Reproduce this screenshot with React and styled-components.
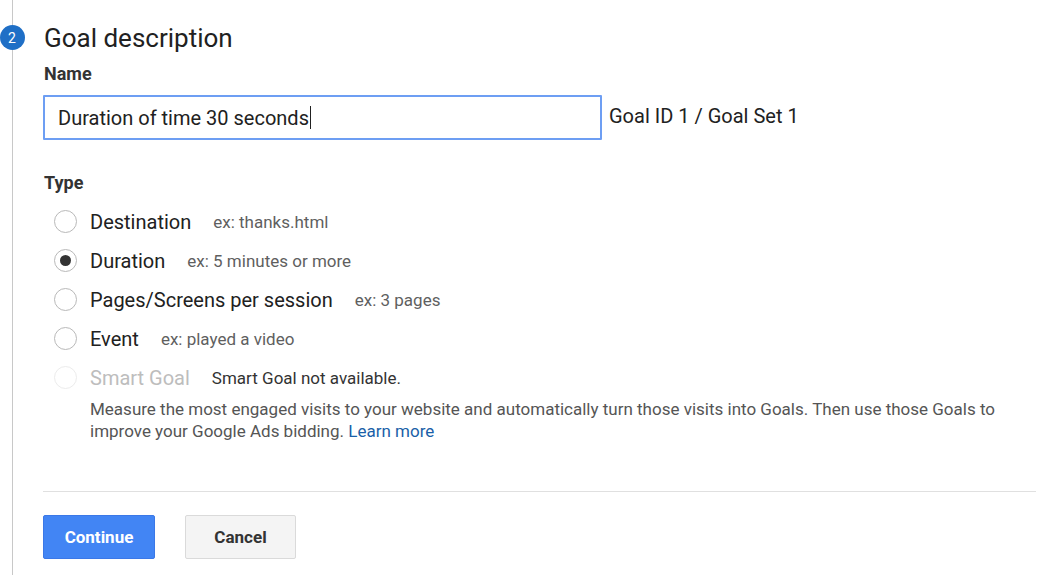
import React from 'react';
import styled, { createGlobalStyle } from 'styled-components';

const GlobalStyle = createGlobalStyle`
  html, body {
    margin: 0;
    padding: 0;
    background: #fff;
    font-family: Roboto, "Liberation Sans", Arial, sans-serif;
    color: #212121;
  }
`

const Page = styled.div`
  display: flex;
  width: 1038px;
  height: 575px;
  overflow: hidden;
`

const Rail = styled.div`
  width: 24px;
  display: flex;
  flex-direction: column;
  align-items: center;
  flex-shrink: 0;
`

const RailLine = styled.div`
  width: 1px;
  background: #c8c8c8;
  height: ${p => p.$h ? p.$h + 'px' : 'auto'};
  flex: ${p => p.$h ? '0 0 auto' : '1'};
`

const StepBadge = styled.div`
  width: 25px;
  height: 25px;
  border-radius: 50%;
  background: #1f6fc6;
  color: #fff;
  font-size: 14px;
  display: flex;
  align-items: center;
  justify-content: center;
  flex-shrink: 0;
`

const Content = styled.div`
  flex: 1;
  margin-left: 19px;
  margin-right: 2px;
  padding-top: 22px;
  display: flex;
  flex-direction: column;
`

const Title = styled.h1`
  margin: 0 0 8px 1px;
  font-size: 26px;
  line-height: 32px;
  font-weight: 400;
  color: #212121;
`

const Label = styled.div`
  font-size: 18px;
  line-height: 24px;
  font-weight: 700;
  color: #333;
  margin-left: 1px;
  margin-top: ${p => p.$top || 0}px;
`

const NameRow = styled.div`
  display: flex;
  align-items: center;
  margin-top: 9px;
`

const TextBox = styled.div`
  box-sizing: border-box;
  width: 559px;
  height: 45px;
  border: 2px solid #6d9ef3;
  border-radius: 1px;
  padding: 0 13px;
  display: flex;
  align-items: center;
  font-size: 20px;
  color: #212121;
`

const Caret = styled.span`
  display: inline-block;
  width: 1px;
  height: 23px;
  background: #212121;
  margin-left: 1px;
`

const GoalId = styled.span`
  margin-left: 7px;
  font-size: 20px;
  color: #212121;
  margin-top: -3px;
`

const RadioList = styled.div`
  display: flex;
  flex-direction: column;
  margin-top: 7px;
  padding-left: 11px;
`

const RadioRow = styled.div`
  display: flex;
  align-items: center;
  height: 39px;
`

const RadioCircle = styled.span`
  box-sizing: border-box;
  width: 23px;
  height: 23px;
  border-radius: 50%;
  border: 1.5px solid ${p => p.$disabled ? '#ececec' : '#b9b9b9'};
  display: flex;
  align-items: center;
  justify-content: center;
  flex-shrink: 0;

  &::after {
    content: '';
    width: 11px;
    height: 11px;
    border-radius: 50%;
    background: #333;
    display: ${p => p.$checked ? 'block' : 'none'};
  }
`

const RadioLabel = styled.span`
  margin-left: 13px;
  font-size: 20px;
  color: ${p => p.$disabled ? '#bdbdbd' : '#212121'};
`

const Example = styled.span`
  margin-left: 22px;
  font-size: 17px;
  color: ${p => p.$dark ? '#333' : '#5f5f5f'};
`

const Help = styled.p`
  margin: 1px 0 0 47px;
  width: 940px;
  font-size: 17px;
  line-height: 22px;
  color: #555;
`

const Link = styled.a`
  color: #1a5fa8;
  text-decoration: none;
`

const Divider = styled.hr`
  border: 0;
  height: 1px;
  background: #e0e0e0;
  margin: 49px 0 0 0;
`

const Buttons = styled.div`
  display: flex;
  gap: 30px;
  margin-top: 23px;
`

const Button = styled.button`
  box-sizing: border-box;
  width: ${p => p.$w}px;
  height: 44px;
  border-radius: 2px;
  font-family: inherit;
  font-size: 17px;
  font-weight: 700;
  cursor: pointer;
  background: ${p => p.$primary ? '#4285f4' : '#f4f4f4'};
  color: ${p => p.$primary ? '#fff' : '#333'};
  border: 1px solid ${p => p.$primary ? '#3b78e7' : '#dadada'};
`

const types = [
  { name: 'Destination', ex: 'ex: thanks.html' },
  { name: 'Duration', ex: 'ex: 5 minutes or more', checked: true },
  { name: 'Pages/Screens per session', ex: 'ex: 3 pages' },
  { name: 'Event', ex: 'ex: played a video' },
  { name: 'Smart Goal', ex: 'Smart Goal not available.', disabled: true },
]

export default function App() {
  return (
    <Page>
      <GlobalStyle />
      <Rail>
        <RailLine $h={25} />
        <StepBadge>2</StepBadge>
        <RailLine />
      </Rail>
      <Content>
        <Title>Goal description</Title>
        <Label>Name</Label>
        <NameRow>
          <TextBox>Duration of time 30 seconds<Caret /></TextBox>
          <GoalId>Goal ID 1 / Goal Set 1</GoalId>
        </NameRow>
        <Label $top={31}>Type</Label>
        <RadioList>
          {types.map(t => (
            <RadioRow key={t.name}>
              <RadioCircle $checked={t.checked} $disabled={t.disabled} />
              <RadioLabel $disabled={t.disabled}>{t.name}</RadioLabel>
              <Example $dark={t.disabled}>{t.ex}</Example>
            </RadioRow>
          ))}
        </RadioList>
        <Help>
          Measure the most engaged visits to your website and automatically turn those visits into Goals. Then use those Goals to improve your Google Ads bidding. <Link href="#">Learn more</Link>
        </Help>
        <Divider />
        <Buttons>
          <Button $primary $w={112}>Continue</Button>
          <Button $w={111}>Cancel</Button>
        </Buttons>
      </Content>
    </Page>
  )
}
